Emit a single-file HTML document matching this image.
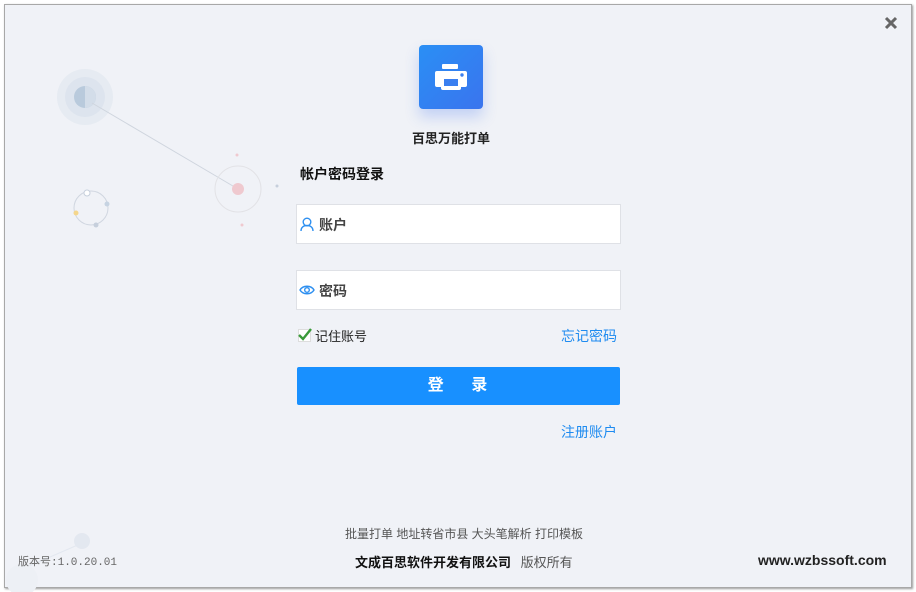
<!DOCTYPE html>
<html><head><meta charset="utf-8"><style>
*{margin:0;padding:0;box-sizing:border-box}
body{width:916px;height:592px;background:#fff;position:relative;overflow:hidden;font-family:"Liberation Sans","Noto Sans CJK SC",sans-serif}
.win{position:absolute;left:4px;top:4px;width:908px;height:584px;background:#f0f2f7;border:1px solid #a8a8a8;box-shadow:1px 1px 2px #999}
.a{position:absolute}
.inp{position:absolute;left:296px;width:325px;height:40px;background:#fff;border:1px solid #dfe1e6;font-size:14px;color:#444;font-weight:bold}
</style></head><body>
<div class="win"></div>
<svg class="a" style="left:0;top:0" width="916" height="592">
<circle cx="85" cy="97" r="28" fill="#e6ebf2"/>
<circle cx="85" cy="97" r="20" fill="#dde4ee"/>
<circle cx="85" cy="97" r="11" fill="#b9cadc"/>
<path d="M85 86a11 11 0 0 1 0 22z" fill="#d3dde9"/>
<line x1="92" y1="103" x2="238" y2="189" stroke="#cfd5de" stroke-width="1"/>
<circle cx="238" cy="189" r="23" fill="none" stroke="#e2e2e6"/>
<circle cx="238" cy="189" r="6" fill="#efc9cf"/>
<circle cx="237" cy="155" r="1.5" fill="#efc9cf"/>
<circle cx="242" cy="225" r="1.5" fill="#efc9cf"/>
<circle cx="277" cy="186" r="1.5" fill="#c6cfdc"/>
<circle cx="91" cy="208" r="17" fill="none" stroke="#d0d6e0"/>
<circle cx="87" cy="193" r="3" fill="#fff" stroke="#c6cfdc"/>
<circle cx="107" cy="204" r="2.5" fill="#c6d3e2"/>
<circle cx="96" cy="225" r="2.5" fill="#c6cfdc"/>
<circle cx="76" cy="213" r="2.5" fill="#f4d68c"/>
<circle cx="82" cy="541" r="8" fill="#e3e8f0"/>
<line x1="80" y1="544" x2="20" y2="570" stroke="#e3e8f0"/>
<circle cx="22" cy="580" r="16" fill="#edf0f5"/>
<path d="M886 18l10 10M896 18l-10 10" stroke="#666" stroke-width="3"/>
</svg>
<div class="a" style="left:419px;top:45px;width:64px;height:64px;border-radius:4px;background:linear-gradient(135deg,#2a8ff5,#3a74ee);box-shadow:0 8px 14px rgba(60,110,240,.25)"></div>
<svg class="a" style="left:419px;top:45px" width="64" height="64">
<rect x="23" y="19" width="16" height="5" rx="1" fill="#fff"/>
<rect x="16" y="26" width="32" height="16" rx="2" fill="#fff"/>
<rect x="22" y="35" width="20" height="10" rx="2" fill="#fff"/>
<rect x="25" y="34" width="14" height="7" fill="#3a7ff0"/>
<circle cx="43" cy="30" r="1.7" fill="#3a7ff0"/>
</svg>
<div class="a" style="left:0;width:902px;top:128px;text-align:center;font-size:13px;font-weight:bold;color:#222">百思万能打单</div>
<div class="a" style="left:300px;top:164px;font-size:14px;font-weight:bold;color:#111">帐户密码登录</div>
<div class="inp" style="top:204px"><svg class="a" style="left:3px;top:12px" width="14" height="15"><circle cx="7" cy="5" r="3.8" fill="none" stroke="#2d8ff0" stroke-width="1.4"/><path d="M1 14c0-4 3-5.5 6-5.5s6 1.5 6 5.5" fill="none" stroke="#2d8ff0" stroke-width="1.4"/></svg><span class="a" style="left:22px;top:10px">账户</span></div>
<div class="inp" style="top:270px"><svg class="a" style="left:2px;top:13px" width="16" height="12"><path d="M1 6c3-5 11-5 14 0c-3 5-11 5-14 0z" fill="none" stroke="#2d8ff0" stroke-width="1.4"/><circle cx="8" cy="6" r="2.3" fill="none" stroke="#2d8ff0" stroke-width="1.4"/></svg><span class="a" style="left:22px;top:10px">密码</span></div>
<div class="a" style="left:298px;top:329px;width:13px;height:13px;background:#fff;border:1px solid #ddd"></div>
<svg class="a" style="left:298px;top:328px" width="14" height="14"><path d="M1 7l4 4 8-10" fill="none" stroke="#3a9a3a" stroke-width="2.4"/></svg>
<div class="a" style="left:315px;top:326px;font-size:13px;color:#222">记住账号</div>
<div class="a" style="left:561px;top:326px;font-size:14px;color:#1e8bf0">忘记密码</div>
<div class="a" style="left:297px;top:367px;width:323px;height:38px;background:#1890ff;border-radius:2px;color:#fff;font-size:16px;font-weight:bold;text-align:center;line-height:38px;letter-spacing:2px">登&nbsp;&nbsp;&nbsp;&nbsp;录</div>
<div class="a" style="left:561px;top:422px;font-size:14px;color:#1e8bf0">注册账户</div>
<div class="a" style="left:0;width:928px;top:525px;text-align:center;font-size:12px;color:#555">批量打单 地址转省市县 大头笔解析 打印模板</div>
<div class="a" style="left:355px;top:552px;font-size:13px;font-weight:bold;color:#111">文成百思软件开发有限公司 <span style="font-weight:normal;color:#555;margin-left:6px">版权所有</span></div>
<div class="a" style="left:18px;top:553px;font-size:11px;color:#666;font-family:'Liberation Mono','Noto Sans CJK SC',monospace">版本号:1.0.20.01</div>
<div class="a" style="left:758px;top:552px;font-size:14px;font-weight:bold;color:#222">www.wzbssoft.com</div>
</body></html>
